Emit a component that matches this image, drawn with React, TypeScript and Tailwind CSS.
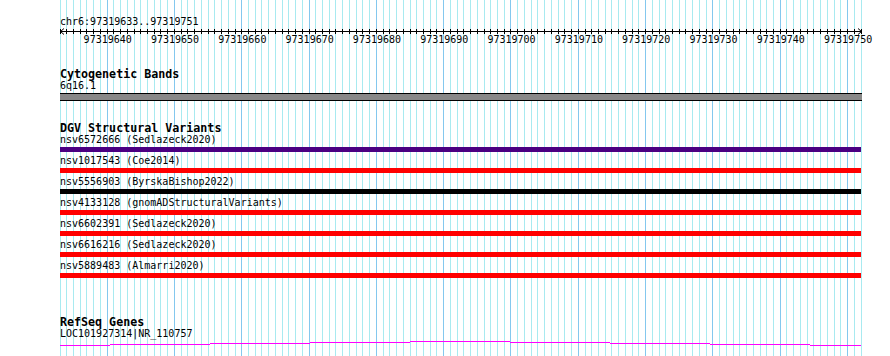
import React from 'react';

// region shown in the panel
const START = 97319633;
const END = 97319751;
const X0 = 60;
const SPAN = 801;
const STEP = SPAN / (END - START + 1);
const COUNT = END - START + 2; // one grid line per base boundary

const px = (i: number) => i * STEP;

const variants = [
  { id: 'nsv6572666', study: 'Sedlazeck2020', color: 'bg-[#4b0082]' },
  { id: 'nsv1017543', study: 'Coe2014', color: 'bg-[#ff0000]' },
  { id: 'nsv5556903', study: 'ByrskaBishop2022', color: 'bg-black' },
  { id: 'nsv4133128', study: 'gnomADStructuralVariants', color: 'bg-[#ff0000]' },
  { id: 'nsv6602391', study: 'Sedlazeck2020', color: 'bg-[#ff0000]' },
  { id: 'nsv6616216', study: 'Sedlazeck2020', color: 'bg-[#ff0000]' },
  { id: 'nsv5889483', study: 'Almarri2020', color: 'bg-[#ff0000]' },
];

// stepped line of the gene model (x range relative to track, y offset)
const geneSteps = [
  [0, 50, 4],
  [50, 150, 3],
  [150, 250, 2],
  [250, 350, 1],
  [350, 450, 0],
  [450, 550, 1],
  [550, 650, 2],
  [650, 750, 3],
  [750, 801, 4],
];

function Grid() {
  const lines = [];
  for (let i = 0; i < COUNT; i++) {
    const x = Math.floor(X0 + px(i)) + 0.5;
    const major = (START + i) % 10 === 0;
    lines.push(
      <line key={i} x1={x} x2={x} y1={0} y2={356} stroke={major ? '#84c8ee' : '#a8eaf0'} strokeWidth={1} />
    );
  }
  return (
    <svg className="absolute inset-0" width={890} height={356}>
      {lines}
    </svg>
  );
}

function Ruler() {
  const ticks = [];
  const labels = [];
  for (let i = 0; i < COUNT; i++) {
    const x = Math.floor(px(i)) + 0.5;
    ticks.push(<line key={i} x1={x} x2={x} y1={0} y2={5} stroke="black" strokeWidth={1} />);
    if ((START + i) % 10 === 0) {
      labels.push(
        <span key={i} className="absolute top-0 w-[48px] text-center leading-[11px]" style={{ left: px(i) - 23.5 }}>
          {START + i}
        </span>
      );
    }
  }
  return (
    <div>
      <div className="h-[13px] leading-[11px]">chr6:{START}..{END}</div>
      <svg width={804} height={5} className="block overflow-visible">
        <line x1={0} x2={802} y1={2.5} y2={2.5} stroke="black" strokeWidth={1} />
        {ticks}
        <polyline points="4,-0.5 0.5,2.5 4,5.5" fill="none" stroke="black" strokeWidth={1} />
        <polyline points="798,-0.5 801.5,2.5 798,5.5" fill="none" stroke="black" strokeWidth={1} />
      </svg>
      <div className="relative h-[13px]">{labels}</div>
    </div>
  );
}

function TrackTitle({ children }: { children: React.ReactNode }) {
  return <div className="h-[13px] leading-[12px] text-[11.67px] font-bold">{children}</div>;
}

export default function App() {
  return (
    <div className="relative w-[890px] h-[356px] overflow-hidden bg-white text-black font-['DejaVu_Sans_Mono',monospace] text-[10px]">
      <Grid />
      <div className="relative pl-[60px] pt-[16px]">
        <div className="w-[802px]">
          <Ruler />

          <section className="mt-[21px]">
            <TrackTitle>Cytogenetic Bands</TrackTitle>
            <div className="h-[12px] leading-[10px]">6q16.1</div>
            <div className="h-[8px] bg-[#888888] border-y border-black" />
          </section>

          <section className="mt-[21px]">
            <TrackTitle>DGV Structural Variants</TrackTitle>
            <div className="flex flex-col gap-[4px]">
              {variants.map((v) => (
                <div key={v.id}>
                  <div className="h-[12px] leading-[10px] whitespace-pre">{v.id} ({v.study})</div>
                  <div className={`h-[5px] w-[801px] ${v.color}`} />
                </div>
              ))}
            </div>
          </section>

          <section className="mt-[38px]">
            <TrackTitle>RefSeq Genes</TrackTitle>
            <div className="h-[12px] leading-[10px]">LOC101927314|NR_110757</div>
            <svg width={802} height={6} className="block">
              {geneSteps.map(([a, b, y]) => (
                <rect key={a} x={a} y={y} width={b - a} height={1} fill="#ff00ff" />
              ))}
            </svg>
          </section>
        </div>
      </div>
    </div>
  );
}
